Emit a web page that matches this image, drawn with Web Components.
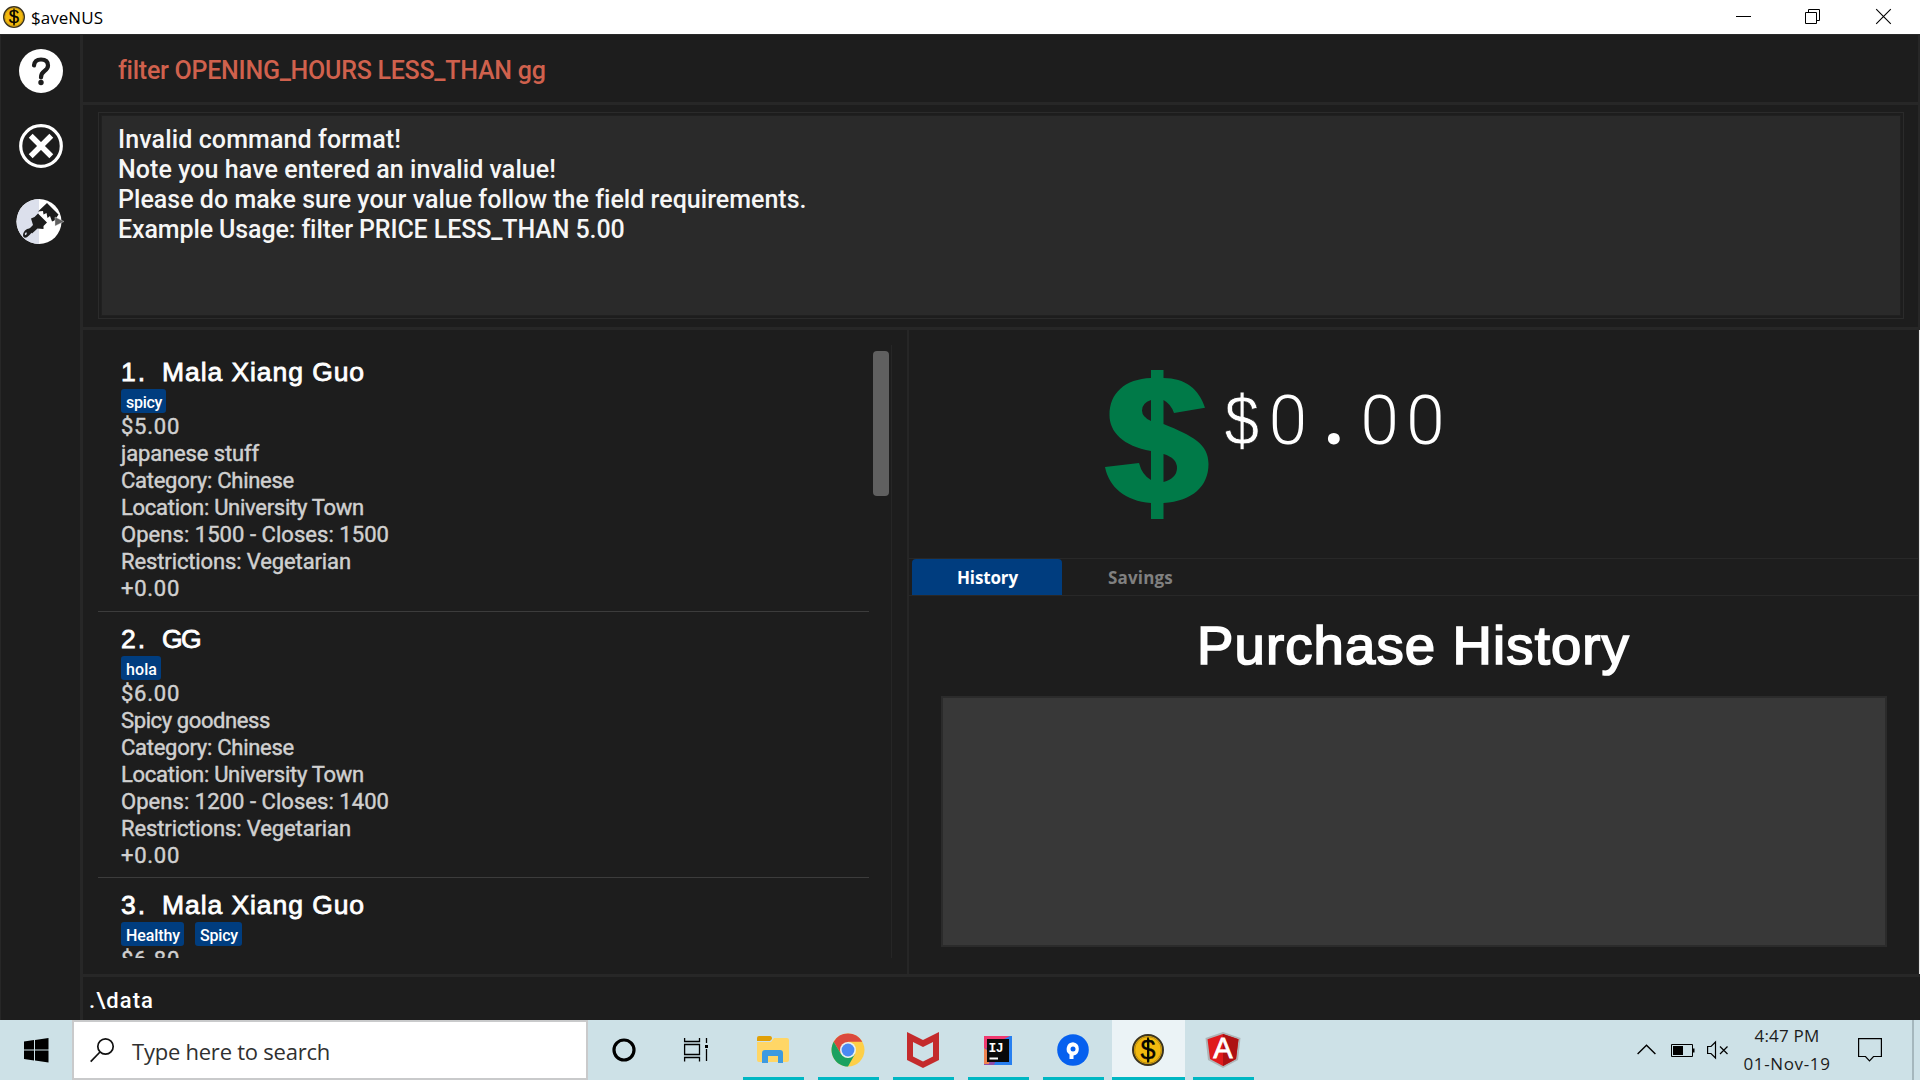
<!DOCTYPE html>
<html lang="en">
<head>
<meta charset="utf-8">
<title>$aveNUS</title>
<style>
html,body{margin:0;height:100%;overflow:hidden;background:#1d1d1d}
body{font-family:Roboto,"Liberation Sans",Arial,sans-serif;font-weight:500}
</style>
</head>
<body>
<savenus-desktop></savenus-desktop>
<script>
const define = (name, css, html) => {
  const tpl = document.createElement('template');
  tpl.innerHTML = `<style>:host{display:block;box-sizing:border-box}*{box-sizing:border-box}svg{display:block;flex:none;overflow:visible}${css}</style>${html}`;
  customElements.define(name, class extends HTMLElement {
    constructor() {
      super();
      this.attachShadow({mode: 'open'}).append(tpl.content.cloneNode(true));
    }
  });
};

const coin = s => `<svg width="${s}" height="${s}" viewBox="0 0 32 32"><circle cx="16" cy="16" r="15" fill="#f2b90f" stroke="#3a3320" stroke-width="2"/><circle cx="16" cy="16" r="13.3" fill="none" stroke="#b98b10" stroke-width="1"/><text x="16" y="25" text-anchor="middle" font-family="Liberation Sans" font-weight="400" font-size="27" fill="#080600" stroke="#080600" stroke-width=".3">$</text><path d="M16 3.5V28.5" stroke="#080600" stroke-width="1.8"/></svg>`;

define('savenus-desktop', `
:host{display:flex;flex-direction:column;width:1920px;height:1080px;overflow:hidden}
.app{height:986px;display:flex;background:#1d1d1d;border-top:1px solid #292929}
.main{flex:1;display:flex;flex-direction:column;min-width:0}
.split{height:647px;display:flex;border-right:1px solid #e4e4e4}
.foot{flex:1;border-top:3px solid #272727;padding:2px 0 0 6px;font-size:22px;line-height:44px;color:#fff}
`, `<window-bar></window-bar>
<div class="app"><side-bar></side-bar><div class="main"><command-line></command-line><result-display></result-display>
<div class="split"><food-list></food-list><wallet-pane></wallet-pane></div>
<div class="foot"><fit-text w="65">.\\data</fit-text></div></div></div>
<task-bar></task-bar>`);

define('window-bar', `
:host{height:34px;background:#fff;display:flex;align-items:center;padding-left:3px;color:#000;font-family:"Open Sans","Noto Sans",sans-serif;font-weight:400;font-size:17px;line-height:34px}
.t{margin-left:6px;height:34px;flex:1;padding-top:.5px}
.b{display:flex;gap:56px;padding:0 29px 1px 0}
`, `${coin(22)}<div class="t"><fit-text w="72">$aveNUS</fit-text></div>
<div class="b"><svg width="15" height="15"><path d="M0 7.5H15" stroke="#000"/></svg>
<svg width="15" height="15" style="margin-left:-2px"><path d="M.5 3.5h11v11h-11zM3.500 3V.5h11v11H12" fill="none" stroke="#000"/></svg>
<svg width="15" height="15"><path d="M.2.2L14.800 14.800M14.800.2L.2 14.800" stroke="#000" stroke-width="1.1"/></svg></div>`);

define('side-bar', `
:host{width:83px;flex:none;border-left:1px solid #272727;border-right:3px solid #272727;padding:13px 0 0 17px}
svg{margin-bottom:29px}
`, `<svg width="46" height="46" viewBox="0 0 46 46"><circle cx="23" cy="23" r="22" fill="#fff"/><g fill="none" stroke="#1d1d1d"><path d="M16 17.500Q16.500 11.500 23 11.500Q30 11.500 30 17.500Q30 20.500 26.500 23Q23 25.500 23 29.500" stroke-width="4.200" stroke-linecap="round"/></g><circle cx="23" cy="34.500" r="2.700" fill="#1d1d1d"/></svg>
<svg width="46" height="46" viewBox="0 0 46 46"><circle cx="23" cy="23" r="20.300" fill="none" stroke="#fff" stroke-width="3.200"/><path d="M12.700 12.700L33.300 33.300M33.300 12.700L12.700 33.300" stroke="#fff" stroke-width="5.500"/></svg>
<svg width="50" height="46" viewBox="0 0 50 46" style="margin-left:-2px"><circle cx="23" cy="23.500" r="22.500" fill="#fff"/><path d="M23 1A22.500 22.500 0 0 0 23 46Z" fill="#dce0ec"/><g fill="#1d1d1d"><path d="M31 5L42.500 16.500 38.500 22.500 36 23.500 34 18 31.500 20 30.500 15 27.500 16.500 27 13 22 13.500Z"/><path d="M15 20.500L18.500 19 22 15.500 31 24.500 27.500 28 27.500 31Q24 30.500 21.500 30.500L16 35.500 12 32 17 27Z"/><path fill-rule="evenodd" d="M14 30.500Q17.500 34 13 37.500Q9.500 41 7.500 39Q6 36 9 32.500Q11.500 30 14 30.500ZM10.200 34Q8 35.500 9 37.300Q11.800 36.500 10.200 34Z"/></g><path d="M39 19L48 23.500 39 28Z" fill="#606060" stroke="#ddd" stroke-width=".4"/></svg>`);

define('command-line', `
:host{height:70px;border-bottom:3px solid #272727;border-right:2px solid #272727;padding-left:35px;font-size:25px;line-height:71px;color:#d0614d}
`, `<fit-text w="427">filter OPENING_HOURS LESS_THAN gg</fit-text>`);

define('result-display', `
:host{height:225px;padding:7px 14px 8px 15px;border-bottom:3px solid #272727;border-right:2px solid #272727}
.o{height:207px;border:1px solid #2b2b2b;padding:2px}
.i{height:100%;background:#2a2a2a;border:1px solid #202020;padding:9px 0 0 16px;font-size:25px;line-height:30px;color:#f6f6f6}
`, `<div class="o"><div class="i">
<div><fit-text w="283">Invalid command format!</fit-text></div><div><fit-text w="438">Note you have entered an invalid value!</fit-text></div>
<div><fit-text w="688">Please do make sure your value follow the field requirements.</fit-text></div><div><fit-text w="506">Example Usage: filter PRICE LESS_THAN 5.00</fit-text></div></div></div>`);

define('food-list', `
:host{width:826px;flex:none;border-right:2px solid #262626;padding:15px 0 0 15px;display:flex;height:644px}
.v{width:771px;height:613px;overflow:hidden}
.s{width:23px;height:613px;border-right:1px solid #262626;padding:6px 0 0 4px}
.th{width:16px;height:145px;border-radius:4px;background:#606060}
`, `<div class="v">
<food-card><fit-text slot="n" w="26">1.</fit-text><fit-text slot="t" w="203">Mala Xiang Guo</fit-text><food-tag slot="g"><fit-text w="36">spicy</fit-text></food-tag>
<fit-text w="59">$5.00</fit-text><fit-text w="138">japanese stuff</fit-text><fit-text w="173">Category: Chinese</fit-text><fit-text w="243">Location: University Town</fit-text><fit-text w="268">Opens: 1500 - Closes: 1500</fit-text><fit-text w="230">Restrictions: Vegetarian</fit-text><fit-text w="59">+0.00</fit-text></food-card>
<food-card><fit-text slot="n" w="26">2.</fit-text><fit-text slot="t" w="38">GG</fit-text><food-tag slot="g"><fit-text w="31">hola</fit-text></food-tag>
<fit-text w="59">$6.00</fit-text><fit-text w="149">Spicy goodness</fit-text><fit-text w="173">Category: Chinese</fit-text><fit-text w="243">Location: University Town</fit-text><fit-text w="268">Opens: 1200 - Closes: 1400</fit-text><fit-text w="230">Restrictions: Vegetarian</fit-text><fit-text w="59">+0.00</fit-text></food-card>
<food-card><fit-text slot="n" w="26">3.</fit-text><fit-text slot="t" w="203">Mala Xiang Guo</fit-text><food-tag slot="g"><fit-text w="54">Healthy</fit-text></food-tag><food-tag slot="g"><fit-text w="38">Spicy</fit-text></food-tag>
<fit-text w="59">$6.80</fit-text></food-card>
</div><div class="s"><div class="th"></div></div>`);

define('food-card', `
:host{height:266.500px;border-bottom:1px solid #3c3c3c;padding:11px 0 0 23px}
.h{height:33px;font:400 26.500px/32px "Liberation Sans",Arial,sans-serif;color:#fff;-webkit-text-stroke:.8px #fff;display:flex}
.n{width:41px}
.g{display:flex;gap:11px;height:24px}
.l{display:flex;flex-direction:column;align-items:flex-start;font-size:22px;line-height:27px;color:#d0d0d0;font-weight:400;-webkit-text-stroke:.45px #d0d0d0}
`, `<div class="h"><div class="n"><slot name="n"></slot></div><slot name="t"></slot></div><div class="g"><slot name="g"></slot></div><div class="l"><slot></slot></div>`);

define('food-tag', `
:host{height:24px;background:#003d7f;border-radius:3px;padding:0 4px 0 5px;font-size:16px;line-height:27px;color:#fff}
`, `<slot></slot>`);

define('wallet-pane', `
:host{flex:1;min-width:0;display:flex;flex-direction:column;border-right:1px solid #262626}
.m{height:228px;display:flex;padding:40px 0 0 196px}
.a{display:flex;margin-left:10px;height:100px;color:#fff}
.a span{width:45.900px;text-align:center;font:300 69px/101px Roboto,sans-serif}
.a .d{font:400 73px/111px "Liberation Mono",monospace;transform:scaleX(.85);-webkit-text-stroke:.8px #1d1d1d}
.a .p{font:900 72px/92px Lato,sans-serif}
.tabs{height:38px;border-top:1px solid #282828;border-bottom:1px solid #282828;display:flex;padding-left:3px;font:700 17px/37px "Open Sans","Noto Sans",sans-serif}
.tabs div{width:150px;padding-left:45px;color:#808080}
.tabs .on{background:#003d7f;border-radius:4px 4px 0 0;color:#fff}
h1{margin:0;height:100px;padding-top:15px;text-align:center;font:400 54.500px/70px "Liberation Sans",Arial,sans-serif;color:#fff;-webkit-text-stroke:1.700px #fff}
.box{height:251px;margin:0 31px 0 32px;background:#383838;border:2px solid #2b2b2b}
`, `<div class="m"><svg width="104" height="150" viewBox="0 0 104 150"><path fill="#007a48" fill-rule="evenodd" d="M46 0H58.500V8C80 8 94 19 100 37.700L69 43Q66 34 58.500 30V54C88 66 103.500 74 103.500 94C103.500 116 88 131 58.500 133V149H46V133C20 131 4 117 0 97L34 93Q37 105 46 110V81C18 76 4.500 62 4.500 45C4.500 23 20 9 46 8ZM46 30Q37 33 37 40.500Q37 47 46 51ZM58.500 84V112Q72 108 72 98Q72 88 58.500 84Z"/></svg>
<div class="a"><span class="d">$</span><span>0</span><span class="p">.</span><span>0</span><span>0</span></div></div>
<div class="tabs"><div class="on"><fit-text w="61">History</fit-text></div><div style="padding-left:46px"><fit-text w="65">Savings</fit-text></div></div>
<h1><fit-text w="433">Purchase History</fit-text></h1><div class="box"></div>`);

define('task-item', `
:host{width:61px;margin-right:14px;height:60px;border-bottom:3px solid #00b7c3;display:flex;align-items:center;justify-content:center;padding:3px 2px 0 0}
:host([active]){width:73px;margin:0 8px 0 -6px;background:#ebf3f6}
`, `<slot></slot>`);

define('task-bar', `
:host{height:60px;background:#cde1e7;display:flex;font-family:"Open Sans","Noto Sans",sans-serif;font-weight:400;color:#1c1c1c}
.st{width:72px;padding:18px 0 0 24px}
.se{width:516px;height:60px;background:#fff;border:2px solid #c9cacb;display:flex;padding-left:16px;font-size:22px;line-height:59px;color:#303030}
.se svg{margin:16px 17px 0 0}
.co{margin:18px 0 0 24px}
.tv{margin:18px 34px 0 47px}
.tray{margin-left:auto;display:flex}
.clk{width:94px;margin-left:11px;margin-right:2px;display:flex;flex-direction:column;align-items:center;font-size:17px;line-height:28px;padding-top:2px}
.end{width:8px;border-left:2px solid #a5b7bd;margin-left:30px}
`, `<div class="st"><svg width="25" height="25"><path d="M0 3.500L10 2V11.500H0ZM11 1.900L24.500 0V11.500H11ZM0 12.500H10V22.500L0 21ZM11 12.500H24.500V24.500L11 22.600Z"/></svg></div>
<div class="se"><svg width="25" height="25" fill="none" stroke="#111" stroke-width="1.700"><circle cx="15.500" cy="8.500" r="7.700"/><path d="M10 14L.7 23.700"/></svg><fit-text w="198">Type here to search</fit-text></div>
<svg class="co" width="25" height="25"><circle cx="12" cy="12" r="10" fill="none" stroke="#000" stroke-width="3.200"/></svg>
<svg class="tv" width="25" height="24" fill="none" stroke="#000" stroke-width="1.300"><path d="M.6 0V3.500H15.500V0M.6 23.500V19.500H15.500V23.500M.6 6.500H15.500V16.500H.6ZM22.500 0V5M22.500 11V23"/><path d="M21 8.500h3" stroke-width="3"/></svg>
<task-item><svg width="32" height="28"><path d="M0 2Q0 0 2 0H13Q15 0 15 3L13 5H0Z" fill="#e1a007"/><path d="M0 6H14L17 2H30Q32 2 32 4V24Q32 26 30 26H2Q0 26 0 24Z" fill="#ffd666"/><path d="M5 27V17Q5 14 8 14H23Q26 14 26 17V27H21V20H11V27Z" fill="#3d9ae0"/></svg></task-item>
<task-item><svg width="34" height="34" viewBox="0 0 34 34"><circle cx="17" cy="17" r="16.500" fill="#fdcf48"/><path d="M2.700 8.800A16.500 16.500 0 0 1 31.300 8.800H17L10 21Z" fill="#db4a3e"/><path d="M2.700 8.800A16.500 16.500 0 0 0 17 33.500L24 21 17 25 10 21Z" fill="#1ba160"/><circle cx="17" cy="17" r="8" fill="#e9f1ef"/><circle cx="17" cy="17" r="6.400" fill="#4a89f3"/></svg></task-item>
<task-item><svg width="32" height="36"><path fill="#c42b2c" fill-rule="evenodd" d="M0 0L16 8 32 0V28L16 36 0 28ZM6 10V24.500L16 29.500 26 24.500V10L16 15Z"/></svg></task-item>
<task-item><svg width="28" height="29"><path d="M0 0H28V29H0Z" fill="#277ff0"/><path d="M0 0H22L10 29H0Z" fill="#8d4daa"/><path d="M0 0H26L0 13Z" fill="#f03a70"/><path d="M0 12L6 16 5 28H0Z" fill="#ef8350"/><path d="M3 3H25V26H3Z" fill="#090909"/><path d="M5.500 21.500H14V23.500H5.500Z" fill="#fff"/><text x="4.500" y="15.500" font-family="Liberation Mono" font-weight="700" font-size="13" letter-spacing="-.5" fill="#fff">IJ</text></svg></task-item>
<task-item><svg width="32" height="32"><circle cx="16" cy="16" r="15.800" fill="#0660ef"/><path d="M16 8.300A6.700 6.700 0 0 0 12.500 20.500V25H16.500V21.500A6.700 6.700 0 0 0 16 8.300Z" fill="#fff"/><circle cx="16" cy="15" r="2.500" fill="#0660ef"/></svg></task-item>
<task-item active>${coin(32)}</task-item>
<task-item><svg width="36" height="36"><path d="M18 0L35.500 6 33 28 18 36 3 28 .5 6Z" fill="#aeb5b8"/><path d="M18 2L33.500 7.300 31 27 18 34 5 27 2.500 7.300Z" fill="#e0191c"/><path d="M18 2L33.500 7.300 31 27 18 34Z" fill="#ad1114"/><text x="18" y="26" text-anchor="middle" font-family="Liberation Sans" font-weight="400" font-size="29" fill="#fff" stroke="#fff" stroke-width=".8">A</text></svg></task-item>
<div class="tray">
<svg width="19" height="12" style="margin-top:24px"><path d="M.6 10L9.500 1.200 18.400 10" fill="none" stroke="#000" stroke-width="1.400"/></svg>
<svg width="24" height="13" style="margin:24px 0 0 15px"><path d="M.5.5H21.500V12.500H.5Z" fill="none" stroke="#000"/><path d="M2 2H12V11H2ZM22 4.500H23.500V8.500H22Z"/></svg>
<svg width="22" height="18" style="margin:21px 0 0 12px" fill="none" stroke="#000" stroke-width="1.200"><path d="M.6 5.500H4L8.500 1V17L4 12.500H.6ZM13 5.500L20.500 13M20.500 5.500L13 13"/></svg>
<div class="clk"><fit-text w="65">4:47 PM</fit-text><fit-text w="87">01-Nov-19</fit-text></div>
<svg width="24" height="24" style="margin:18px 0 0 22px"><path d="M.6.6H23.400V18.500H15.500L11.500 22.800 7.500 18.500H.6Z" fill="none" stroke="#000" stroke-width="1.200"/></svg>
<div class="end"></div></div>`);

// Inline label whose tracking is adjusted so that it fills the width given by its "w" attribute.
customElements.define('fit-text', class extends HTMLElement {
  constructor() {
    super();
    this.attachShadow({mode: 'open'}).innerHTML = '<style>:host{display:inline-block;white-space:pre;flex:none;vertical-align:top}</style><slot></slot>';
  }
  connectedCallback() {
    const target = parseFloat(this.getAttribute('w'));
    const natural = this.getBoundingClientRect().width;
    this.style.letterSpacing = (target - natural) / this.textContent.length + 'px';
  }
});
</script>
</body>
</html>
